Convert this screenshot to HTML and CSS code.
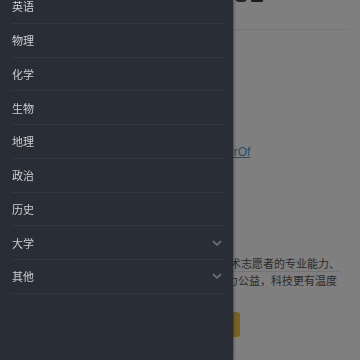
FILE: index.html
```html
<!DOCTYPE html>
<html lang="zh-CN">
  <head>
    <meta charset="UTF-8" />
    <meta name="viewport" content="width=device-width, initial-scale=1.0" />
    <title>分类</title>
    <link rel="stylesheet" href="styles.css">
  </head>
  <body>
    <!-- page 被遮住的页面内容 -->
    <div class="page">
      <div class="pageHead">
        <div class="headTools">
          <span class="toolRound"></span>
          <span class="toolBar"></span>
        </div>
      </div>
      <div class="linkRow">
        <a class="srcLink" href="#">github.com/UrOf</a>
      </div>
      <div class="intro">
        <p class="introLine first">提升技术志愿者的专业能力、</p>
        <p class="introLine second">助力公益，科技更有温度</p>
      </div>
      <div class="btnRow">
        <a class="joinBtn" href="#">加入</a>
      </div>
    </div>

    <!-- mask 半透明遮罩 -->
    <div class="mask"></div>

    <!-- drawer 侧边菜单 -->
    <nav class="drawer">
      <ul class="menuList">
        <li class="menuItem">英语</li>
        <li class="menuItem">物理</li>
        <li class="menuItem">化学</li>
        <li class="menuItem">生物</li>
        <li class="menuItem">地理</li>
        <li class="menuItem">政治</li>
        <li class="menuItem">历史</li>
        <li class="menuItem">大学
          <svg class="arrow" viewBox="0 0 10 6"><path d="M1 1l4 4 4-4" /></svg>
        </li>
        <li class="menuItem">其他
          <svg class="arrow" viewBox="0 0 10 6"><path d="M1 1l4 4 4-4" /></svg>
        </li>
      </ul>
    </nav>
  </body>
</html>
```

FILE: styles.css
```css
* {
  margin: 0;
  padding: 0;
  list-style: none;
  box-sizing: border-box;
}
html, body {
  width: 360px;
  height: 360px;
  overflow: hidden;
}
body {
  background: #fff;
  font-family: "Noto Sans CJK SC", "Noto Sans", sans-serif;
  font-size: 11px;
  color: #555;
}
/* 页面内容 */
.page {
  padding: 0 11px;
}
.pageHead {
  display: flex;
  align-items: flex-start;
  height: 30px;
  border-bottom: 1px solid #ececec;
}
.headTools {
  display: flex;
  align-items: flex-end;
  gap: 4px;
  padding-left: 224px;
  margin-top: -12px;
  height: 14px;
}
.toolRound {
  width: 12px;
  height: 14px;
  border: 2px solid #444;
  border-radius: 4px;
}
.toolBar {
  width: 12px;
  height: 13px;
  background: #3a3a3a;
  border-radius: 1px;
}
.linkRow {
  margin-top: 113px;
  height: 16px;
  line-height: 16px;
  white-space: nowrap;
  padding-left: 152px;
}
.srcLink {
  font-family: "Liberation Sans", Arial, sans-serif;
  font-size: 12px;
  color: #3d9fe0;
  text-decoration: underline;
}
.intro {
  margin-top: 96px;
}
.introLine {
  white-space: nowrap;
  line-height: 17px;
}
.introLine.first {
  padding-left: 186px;
  text-decoration: underline;
  text-decoration-color: #e6e6e6;
  text-underline-offset: 3px;
}
.introLine.second {
  padding-left: 205px;
}
.btnRow {
  margin-top: 23px;
}
.joinBtn {
  display: block;
  width: 229px;
  height: 25px;
  line-height: 25px;
  border-radius: 3px;
  background: #f5c33b;
  color: #fff;
  text-align: center;
  text-decoration: none;
}
/* 遮罩 */
.mask {
  position: fixed;
  left: 0;
  top: 0;
  right: 0;
  bottom: 0;
  background: rgba(0, 0, 0, 0.5);
}
/* 侧边菜单 */
.drawer {
  position: fixed;
  left: 0;
  top: 0;
  bottom: 0;
  width: 233px;
  background: #292e36;
  box-shadow: 1px 0 2px rgba(0, 0, 0, 0.4);
  overflow: hidden;
}
.menuList {
  padding: 0 10px 0 11px;
  margin-top: -10px;
}
.menuItem {
  display: flex;
  align-items: center;
  justify-content: space-between;
  height: 33.75px;
  border-bottom: 1px solid #323842;
  color: #cdcfd2;
  font-size: 11px;
  padding-left: 1px;
}
.arrow {
  width: 10px;
  height: 6px;
  margin-right: 1px;
  fill: none;
  stroke: #666b73;
  stroke-width: 1.8;
}
```
